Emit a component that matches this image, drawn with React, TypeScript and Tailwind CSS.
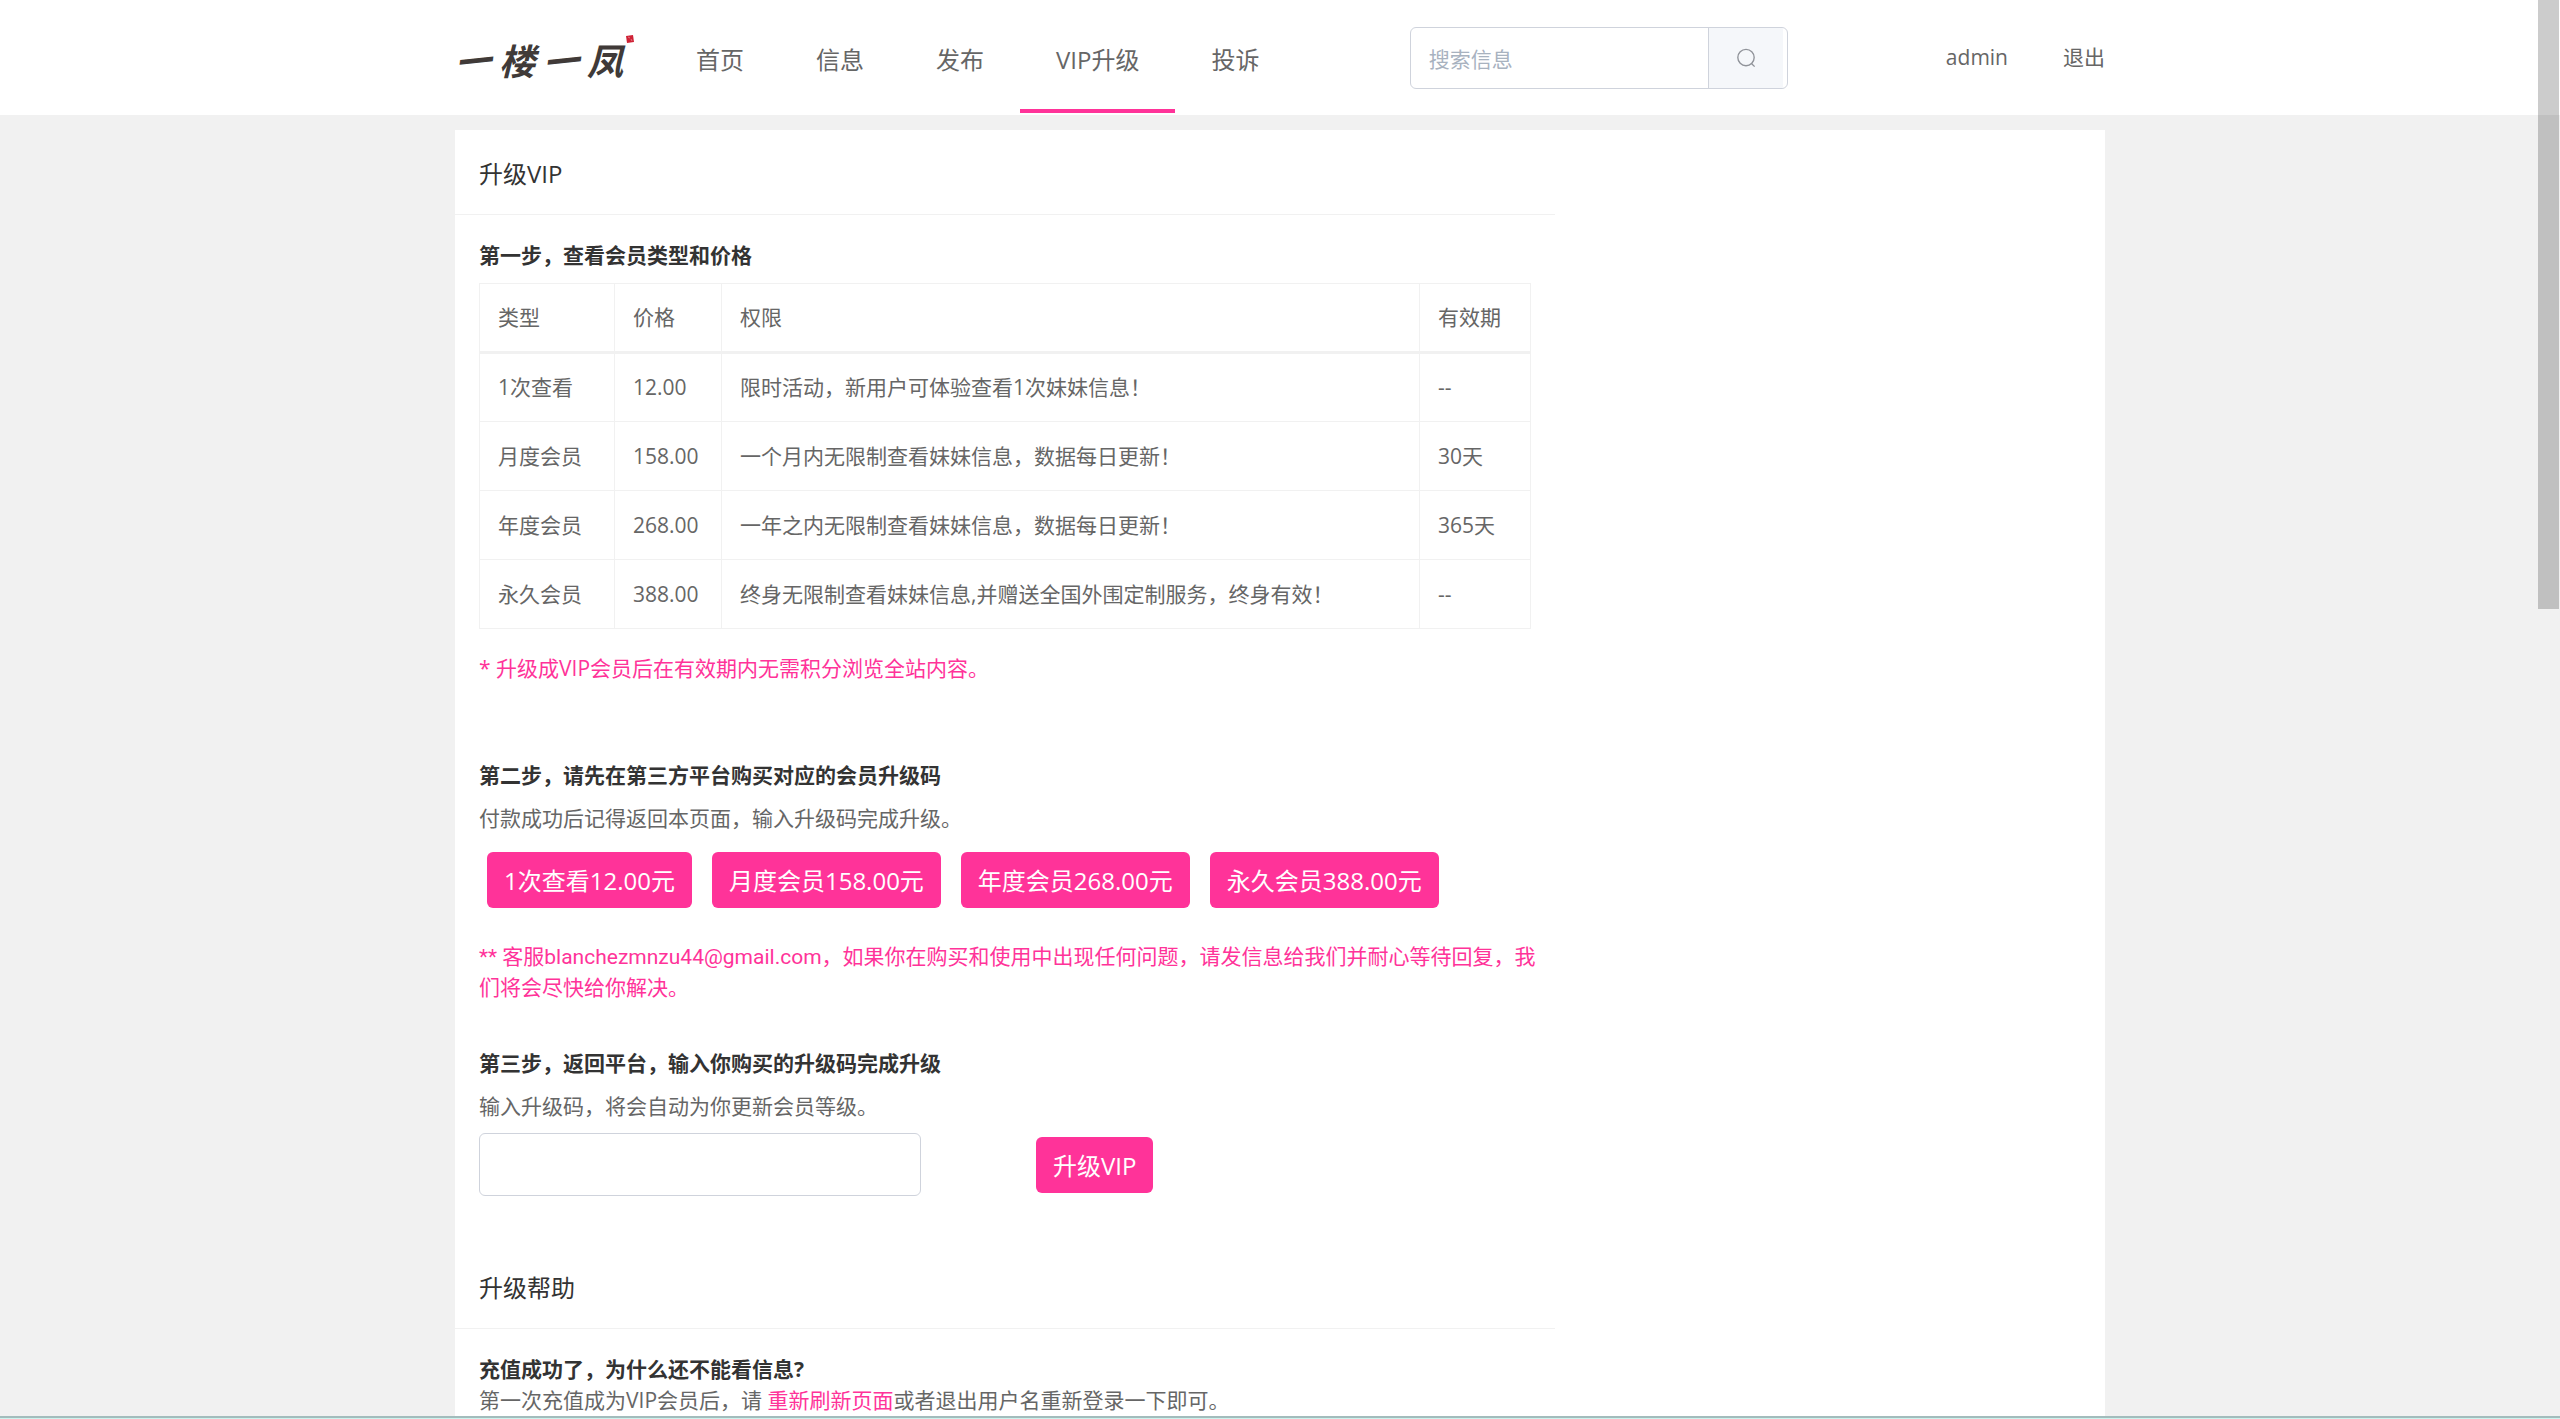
import { useState } from "react";
import type { ReactNode } from "react";

const navItems = ["首页", "信息", "发布", "VIP升级", "投诉"];

const plans = [
  { name: "1次查看", price: "12.00", desc: "限时活动，新用户可体验查看1次妹妹信息！", expiry: "--" },
  { name: "月度会员", price: "158.00", desc: "一个月内无限制查看妹妹信息，数据每日更新！", expiry: "30天" },
  { name: "年度会员", price: "268.00", desc: "一年之内无限制查看妹妹信息，数据每日更新！", expiry: "365天" },
  { name: "永久会员", price: "388.00", desc: "终身无限制查看妹妹信息,并赠送全国外围定制服务，终身有效！", expiry: "--" },
];

function Logo() {
  return (
    <span className="relative flex gap-2 pt-2 text-4xl font-bold text-[#403a38] italic">
      <span className="-rotate-6">一</span>
      <span>楼</span>
      <span className="-rotate-6">一</span>
      <span>凤</span>
      <svg className="absolute top-0 left-[170px]" width="10" height="10" viewBox="0 0 10 10">
        <path d="M1 2l7-1 1 7-7 1z" fill="#cf2236" />
        <path d="M3 3l2 1M6 5l1 2" stroke="#e88a94" strokeWidth="0.8" />
      </svg>
    </span>
  );
}

function SearchIcon() {
  return (
    <svg width="20" height="20" viewBox="0 0 22 22" fill="none" stroke="#909399" strokeWidth="1.5">
      <circle cx="11" cy="10.5" r="9" />
      <path d="M17 17l3.5 3.5" />
    </svg>
  );
}

function SectionTitle({ children }: { children: ReactNode }) {
  return (
    <h2 className="flex h-[85px] items-center border-b border-[#f1f1f1] px-6 pt-1 text-2xl text-[#333]">{children}</h2>
  );
}

function StepTitle({ children }: { children: ReactNode }) {
  return <h3 className="text-[21px] leading-8 font-bold text-[#333]">{children}</h3>;
}

function PinkButton({ children }: { children: ReactNode }) {
  return (
    <button type="button" className="h-14 rounded-md bg-[#ff3399] px-[17px] pt-0.5 text-2xl text-white">
      {children}
    </button>
  );
}

export default function App() {
  const [keyword, setKeyword] = useState("");
  const [code, setCode] = useState("");

  return (
    <div className="flex h-screen flex-col overflow-hidden bg-[#f1f1f1] font-['Open_Sans','Noto_Sans_CJK_SC',sans-serif] text-[21px] leading-[31px] text-[#666]">
      <header className="shrink-0 bg-white">
        <div className="mx-auto flex h-[115px] max-w-[1650px] items-center">
          <a href="#" className="w-[205px]">
            <Logo />
          </a>
          <nav className="flex h-full pb-0.5">
            {navItems.map((item) => (
              <a
                key={item}
                href="#"
                className={`flex items-center border-b-4 px-9 pt-2.5 text-2xl ${
                  item === "VIP升级" ? "border-[#ff3399]" : "border-transparent"
                }`}
              >
                {item}
              </a>
            ))}
          </nav>
          <form className="ml-auto flex h-[62px] w-[378px] overflow-hidden rounded-md border border-[#cfd3dc] bg-white">
            <input
              type="text"
              aria-label="搜索信息"
              placeholder="搜索信息"
              value={keyword}
              onChange={(e) => setKeyword(e.target.value)}
              className="min-w-0 flex-1 px-[18px] pt-1 outline-none placeholder:text-[#a8b2bf]"
            />
            <button
              type="button"
              aria-label="搜索"
              className="mr-1 flex w-[75px] items-center justify-center border-l border-[#cfd3dc] bg-[#f5f7fa]"
            >
              <SearchIcon />
            </button>
          </form>
          <div className="ml-[158px] flex gap-[55px]">
            <a href="#">admin</a>
            <a href="#">退出</a>
          </div>
        </div>
      </header>

      <main className="mx-auto mt-[15px] w-full max-w-[1650px] flex-1 bg-white">
        <div className="w-2/3">
          <SectionTitle>升级VIP</SectionTitle>
          <div className="px-6 pt-6">
            <StepTitle>第一步，查看会员类型和价格</StepTitle>
            <table className="mt-3 w-full table-fixed border-collapse text-left">
              <colgroup>
                <col className="w-[135px]" />
                <col className="w-[107px]" />
                <col />
                <col className="w-[111px]" />
              </colgroup>
              <thead>
                <tr className="h-[69px] border-b-3 border-[#f1f1f1]">
                  {["类型", "价格", "权限", "有效期"].map((title) => (
                    <th key={title} className="border-x border-t border-[#f1f1f1] px-[18px] font-normal">
                      {title}
                    </th>
                  ))}
                </tr>
              </thead>
              <tbody>
                {plans.map((plan) => (
                  <tr key={plan.name} className="h-[69px]">
                    <td className="border border-[#f1f1f1] px-[18px]">{plan.name}</td>
                    <td className="border border-[#f1f1f1] px-[18px]">{plan.price}</td>
                    <td className="border border-[#f1f1f1] px-[18px]">{plan.desc}</td>
                    <td className="border border-[#f1f1f1] px-[18px]">{plan.expiry}</td>
                  </tr>
                ))}
              </tbody>
            </table>
            <p className="mt-6 text-[#ff3399]">* 升级成VIP会员后在有效期内无需积分浏览全站内容。</p>

            <div className="mt-[75px]">
              <StepTitle>第二步，请先在第三方平台购买对应的会员升级码</StepTitle>
              <p className="mt-3">付款成功后记得返回本页面，输入升级码完成升级。</p>
              <div className="mt-[18px] ml-2 flex gap-5">
                {plans.map((plan) => (
                  <PinkButton key={plan.name}>
                    {plan.name}
                    {plan.price}元
                  </PinkButton>
                ))}
              </div>
              <p className="mt-[34px] font-['Roboto','Noto_Sans_CJK_SC',sans-serif] whitespace-nowrap text-[#ff3399]">
                ** 客服blanchezmnzu44@gmail.com，如果你在购买和使用中出现任何问题，请发信息给我们并耐心等待回复，我
                <br />
                们将会尽快给你解决。
              </p>
            </div>

            <div className="mt-[43px]">
              <StepTitle>第三步，返回平台，输入你购买的升级码完成升级</StepTitle>
              <label htmlFor="code" className="mt-3 block">
                输入升级码，将会自动为你更新会员等级。
              </label>
              <div className="mt-[11px] flex items-center gap-[115px]">
                <input
                  id="code"
                  type="text"
                  value={code}
                  onChange={(e) => setCode(e.target.value)}
                  className="h-[63px] w-[442px] rounded-md border border-[#cfd3dc] px-[18px] outline-none"
                />
                <PinkButton>升级VIP</PinkButton>
              </div>
            </div>
          </div>

          <div className="mt-12">
            <SectionTitle>升级帮助</SectionTitle>
            <div className="px-6 pt-6">
              <StepTitle>充值成功了，为什么还不能看信息?</StepTitle>
              <p>
                第一次充值成为VIP会员后，请{" "}
                <a href="#" className="text-[#ff3399]">
                  重新刷新页面
                </a>
                或者退出用户名重新登录一下即可。
              </p>
            </div>
          </div>
        </div>
      </main>

      {/* overlay scrollbar and window edge */}
      <div className="fixed top-0 right-px h-[609px] w-[21px] bg-black/20" />
      <div className="fixed inset-x-0 bottom-0 h-[3px] border-t-2 border-[#a3bcbc] bg-[#cdf3ee]" />
    </div>
  );
}
